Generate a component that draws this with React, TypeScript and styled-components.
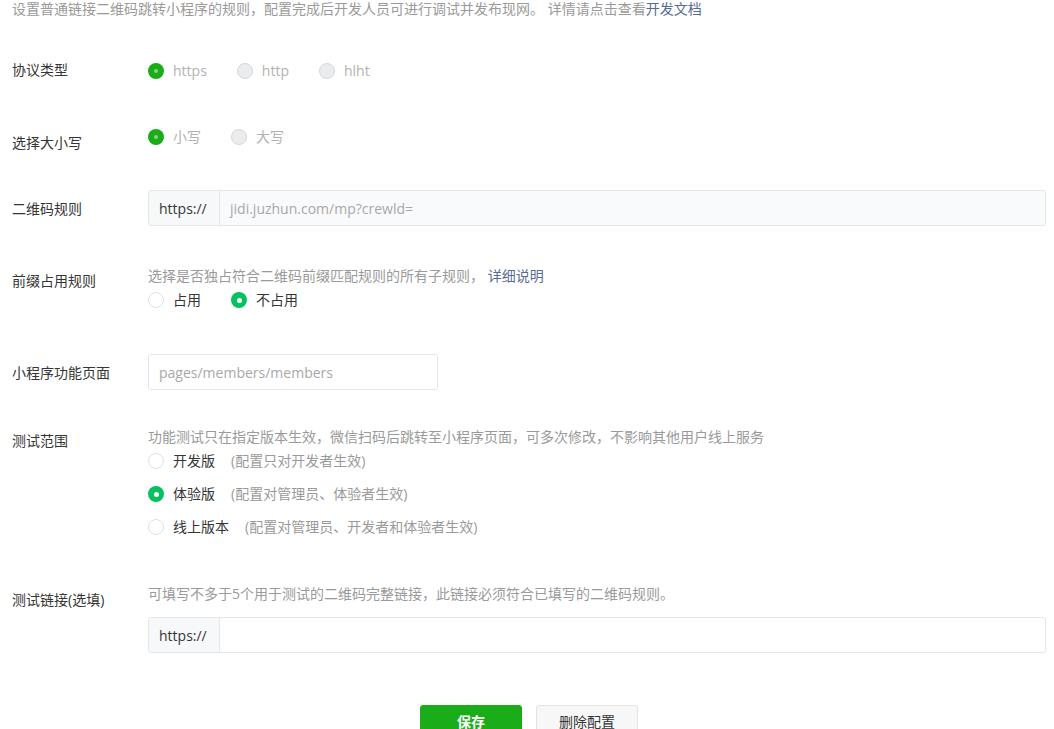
import React from "react";
import styled, { createGlobalStyle, css } from "styled-components";

const GlobalStyle = createGlobalStyle`
  html, body { margin: 0; padding: 0; background: #fff; }
  body {
    font-family: "Open Sans", "Noto Sans CJK SC", sans-serif;
    font-size: 14px;
    color: #353535;
  }
  * { box-sizing: border-box; }
`;

const Page = styled.div`
  width: 1054px;
  padding: 0 8px 0 12px;
`;

const TopTip = styled.div`
  line-height: 18px;
  color: #9a9a9a;
  font-size: 14px;
  white-space: pre;
`;

const Link = styled.a`
  color: #576b95;
  text-decoration: none;
  cursor: pointer;
`;

const Row = styled.div<{ $mt: number }>`
  display: grid;
  grid-template-columns: 136px 1fr;
  align-items: start;
  margin-top: ${(p) => p.$mt}px;
`;

const Label = styled.div<{ $pt: number }>`
  line-height: 20px;
  padding-top: ${(p) => p.$pt}px;
  color: #353535;
`;

const Content = styled.div`
  display: flex;
  flex-direction: column;
  align-items: flex-start;
`;

const Hint = styled.div`
  line-height: 20px;
  color: #9a9a9a;
  white-space: pre;
`;

const RadioGroup = styled.div<{ $stacked?: boolean; $mt?: number }>`
  display: flex;
  margin-top: ${(p) => p.$mt ?? 0}px;
  ${(p) =>
    p.$stacked
      ? css`
          flex-direction: column;
          gap: 11px;
        `
      : css`
          flex-direction: row;
          gap: 30px;
        `}
`;

const RadioItem = styled.label<{ $disabled?: boolean }>`
  display: flex;
  align-items: center;
  height: 22px;
  line-height: 22px;
  color: ${(p) => (p.$disabled ? "#b2b2b2" : "#353535")};
  cursor: ${(p) => (p.$disabled ? "default" : "pointer")};
`;

const Circle = styled.span<{ $checked?: boolean; $disabled?: boolean }>`
  position: relative;
  width: 16px;
  height: 16px;
  border-radius: 50%;
  margin-right: 9px;
  flex: none;
  ${(p) =>
    p.$disabled
      ? p.$checked
        ? css`
            background: #1aad19;
            &::after {
              content: "";
              position: absolute;
              left: 6px;
              top: 6px;
              width: 4px;
              height: 4px;
              border-radius: 50%;
              background: #86d185;
            }
          `
        : css`
            background: #ebecee;
            border: 1px solid #d5d6d8;
          `
      : p.$checked
      ? css`
          background: #07c160;
          &::after {
            content: "";
            position: absolute;
            left: 5.5px;
            top: 5.5px;
            width: 5px;
            height: 5px;
            border-radius: 50%;
            background: #fff;
          }
        `
      : css`
          background: #fff;
          border: 1px solid #e0e1e3;
        `}
`;

const RadioNote = styled.span`
  color: #9a9a9a;
  margin-left: 16px;
`;

const InputBox = styled.div<{ $width?: number; $mt?: number; $filled?: boolean }>`
  display: flex;
  align-items: stretch;
  height: 36px;
  width: ${(p) => (p.$width ? `${p.$width}px` : "100%")};
  margin-top: ${(p) => p.$mt ?? 0}px;
  border: 1px solid #e4e7ea;
  border-radius: 3px;
  background: ${(p) => (p.$filled ? "#f9fafb" : "#fff")};
  overflow: hidden;
`;

const Prefix = styled.div`
  display: flex;
  align-items: center;
  padding: 0 10px;
  width: 71px;
  background: #f6f8f9;
  border-right: 1px solid #e4e7ea;
  color: #353535;
  flex: none;
`;

const Field = styled.div<{ $placeholder?: boolean }>`
  display: flex;
  align-items: center;
  padding: 0 10px;
  flex: 1;
  color: ${(p) => (p.$placeholder ? "#a8a8a8" : "#353535")};
`;

const ButtonBar = styled.div`
  display: flex;
  justify-content: center;
  gap: 14px;
  margin-top: 52px;
`;

const Button = styled.button<{ $primary?: boolean }>`
  width: 102px;
  height: 32px;
  border-radius: 3px;
  font-family: inherit;
  font-size: 14px;
  cursor: pointer;
  ${(p) =>
    p.$primary
      ? css`
          background: #1aad19;
          border: 1px solid #1aad19;
          color: #fff;
          font-weight: bold;
        `
      : css`
          background: #f7f7f7;
          border: 1px solid #e3e3e3;
          color: #353535;
        `}
`;

type Opt = { label: string; note?: string; checked?: boolean };

function Radios({
  options,
  disabled,
  stacked,
  mt,
}: {
  options: Opt[];
  disabled?: boolean;
  stacked?: boolean;
  mt?: number;
}) {
  return (
    <RadioGroup $stacked={stacked} $mt={mt}>
      {options.map((o) => (
        <RadioItem key={o.label} $disabled={disabled}>
          <Circle $checked={o.checked} $disabled={disabled} />
          <span>{o.label}</span>
          {o.note && <RadioNote>{o.note}</RadioNote>}
        </RadioItem>
      ))}
    </RadioGroup>
  );
}

export default function App() {
  return (
    <>
      <GlobalStyle />
      <Page>
        <TopTip>
          设置普通链接二维码跳转小程序的规则，配置完成后开发人员可进行调试并发布现网。 详情请点击查看
          <Link>开发文档</Link>
        </TopTip>

        <Row $mt={42}>
          <Label $pt={0}>协议类型</Label>
          <Content>
            <Radios
              disabled
              options={[{ label: "https", checked: true }, { label: "http" }, { label: "hlht" }]}
            />
          </Content>
        </Row>

        <Row $mt={44}>
          <Label $pt={7}>选择大小写</Label>
          <Content>
            <Radios disabled options={[{ label: "小写", checked: true }, { label: "大写" }]} />
          </Content>
        </Row>

        <Row $mt={37}>
          <Label $pt={9}>二维码规则</Label>
          <Content>
            <InputBox $filled>
              <Prefix>https://</Prefix>
              <Field $placeholder>jidi.juzhun.com/mp?crewld=</Field>
            </InputBox>
          </Content>
        </Row>

        <Row $mt={40}>
          <Label $pt={5}>前缀占用规则</Label>
          <Content>
            <Hint>
              选择是否独占符合二维码前缀匹配规则的所有子规则， <Link>详细说明</Link>
            </Hint>
            <Radios mt={3} options={[{ label: "占用" }, { label: "不占用", checked: true }]} />
          </Content>
        </Row>

        <Row $mt={43}>
          <Label $pt={9}>小程序功能页面</Label>
          <Content>
            <InputBox $width={290}>
              <Field $placeholder>pages/members/members</Field>
            </InputBox>
          </Content>
        </Row>

        <Row $mt={37}>
          <Label $pt={4}>测试范围</Label>
          <Content>
            <Hint>功能测试只在指定版本生效，微信扫码后跳转至小程序页面，可多次修改，不影响其他用户线上服务</Hint>
            <Radios
              stacked
              mt={3}
              options={[
                { label: "开发版", note: "(配置只对开发者生效)" },
                { label: "体验版", note: "(配置对管理员、体验者生效)", checked: true },
                { label: "线上版本", note: "(配置对管理员、开发者和体验者生效)" },
              ]}
            />
          </Content>
        </Row>

        <Row $mt={46}>
          <Label $pt={6}>测试链接(选填)</Label>
          <Content>
            <Hint>可填写不多于5个用于测试的二维码完整链接，此链接必须符合已填写的二维码规则。</Hint>
            <InputBox $mt={13}>
              <Prefix>https://</Prefix>
              <Field />
            </InputBox>
          </Content>
        </Row>

        <ButtonBar>
          <Button $primary>保存</Button>
          <Button>删除配置</Button>
        </ButtonBar>
      </Page>
    </>
  );
}
